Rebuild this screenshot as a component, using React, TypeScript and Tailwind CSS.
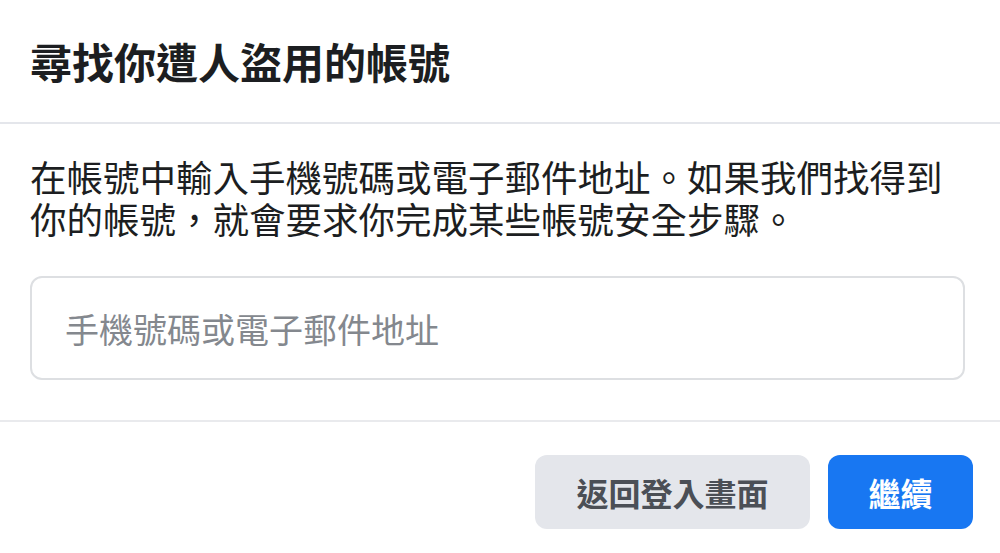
import React from "react";

export default function App() {
  return (
    <div
      className="w-[1000px] h-[553px] bg-white flex flex-col overflow-hidden"
      style={{ fontFamily: '"Noto Sans CJK TC", "Noto Sans", sans-serif' }}
    >
      <div className="h-[124px] shrink-0 flex items-center px-[30px] border-b-2 border-[#e4e6eb]">
        <h1 className="text-[42px] leading-[50px] font-bold text-[#1c1e21]">尋找你遭人盜用的帳號</h1>
      </div>
      <div className="flex flex-col px-[30px] pt-[32px] pb-[40px] border-b-2 border-[#e9eaed]">
        <p className="text-[36.5px] leading-[42px] text-[#1c1e21]">
          在帳號中輸入手機號碼或電子郵件地址。如果我們找得到你的帳號，就會要求你完成某些帳號安全步驟。
        </p>
        <input
          type="text"
          placeholder="手機號碼或電子郵件地址"
          className="mt-[36px] w-[935px] h-[104px] rounded-[12px] border-2 border-[#dddfe2] px-[33px] text-[34px] text-[#1c1e21] placeholder:text-[#84888e] outline-none"
          style={{ fontFamily: '"Noto Sans CJK TC", "Noto Sans", sans-serif' }}
        />
      </div>
      <div className="flex justify-end items-start gap-[18px] pt-[33px] pr-[27px]">
        <button className="w-[275px] h-[74px] rounded-[12px] bg-[#e4e6eb] text-[#4b4f56] text-[32px] font-bold flex items-center justify-center">
          返回登入畫面
        </button>
        <button className="w-[145px] h-[74px] rounded-[12px] bg-[#1877f2] text-white text-[32px] font-bold flex items-center justify-center">
          繼續
        </button>
      </div>
    </div>
  );
}
